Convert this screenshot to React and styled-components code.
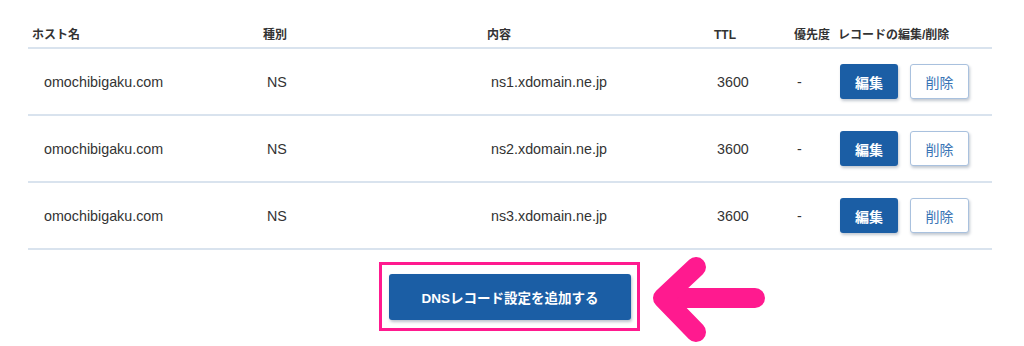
import React from "react";
import styled, { createGlobalStyle } from "styled-components";

const Global = createGlobalStyle`
  html, body { margin: 0; padding: 0; background: #ffffff; }
  body {
    font-family: "Liberation Sans", "Noto Sans CJK JP", Arial, sans-serif;
    color: #333333;
  }
`;

const Page = styled.div`
  width: 1024px;
  height: 346px;
  overflow: hidden;
  padding: 26px 32px 0 28px;
  box-sizing: border-box;
`;

const COLS = "231px 224px 227px 80px 44px 158px";

const Table = styled.div`
  display: grid;
  grid-template-columns: ${COLS};
  width: 964px;
`;

const HeadCell = styled.div`
  font-family: "Liberation Sans", "Noto Sans CJK JP", sans-serif;
  font-weight: 700;
  font-size: 12px;
  line-height: 18px;
  padding: 0 0 3px 4px;
  white-space: nowrap;
  color: #333;
  border-bottom: 2px solid #d9e3ee;
`;

const Cell = styled.div`
  height: 65px;
  display: flex;
  align-items: center;
  padding-left: ${(p) => p.$pad}px;
  font-size: 14.3px;
  color: #333;
  white-space: nowrap;
  border-bottom: 2px solid #d9e3ee;
`;

const Actions = styled.div`
  display: flex;
  gap: 12px;
  align-items: center;
`;

const BtnBase = styled.button`
  height: 35px;
  box-sizing: border-box;
  border-radius: 3px;
  font-family: "Noto Sans CJK JP", sans-serif;
  font-size: 14px;
  padding: 0;
  display: flex;
  align-items: center;
  justify-content: center;
  box-shadow: 1px 2px 3px rgba(40, 60, 90, 0.28);
  cursor: pointer;
`;

const EditBtn = styled(BtnBase)`
  width: 58px;
  background: #1b5ea5;
  border: none;
  color: #ffffff;
  font-weight: 700;
`;

const DeleteBtn = styled(BtnBase)`
  width: 59px;
  background: #ffffff;
  border: 1px solid #a9c1de;
  color: #3a74b5;
  font-weight: 400;
`;

const Footer = styled.div`
  display: flex;
  justify-content: center;
  padding-top: 12px;
  padding-right: 1px;
`;

const Highlight = styled.div`
  position: relative;
  border: 3px solid #ff1a8f;
  padding: 9px 6px 8px 7px;
`;

const AddBtn = styled.button`
  width: 242px;
  height: 46px;
  background: #1b5ea5;
  color: #ffffff;
  border: none;
  border-radius: 3px;
  font-family: "Liberation Sans", "Noto Sans CJK JP", sans-serif;
  font-weight: 700;
  font-size: 13.5px;
  box-shadow: 1px 2px 3px rgba(40, 60, 90, 0.3);
  display: block;
  padding: 0;
  cursor: pointer;
`;

const Arrow = styled.svg`
  position: absolute;
  left: 270px;
  top: -8px;
  width: 118px;
  height: 90px;
  overflow: visible;
`;

const records = [
  { host: "omochibigaku.com", type: "NS", value: "ns1.xdomain.ne.jp", ttl: "3600", prio: "-" },
  { host: "omochibigaku.com", type: "NS", value: "ns2.xdomain.ne.jp", ttl: "3600", prio: "-" },
  { host: "omochibigaku.com", type: "NS", value: "ns3.xdomain.ne.jp", ttl: "3600", prio: "-" },
];

export default function App() {
  return (
    <>
      <Global />
      <Page>
        <Table>
          <HeadCell>ホスト名</HeadCell>
          <HeadCell>種別</HeadCell>
          <HeadCell>内容</HeadCell>
          <HeadCell>TTL</HeadCell>
          <HeadCell>優先度</HeadCell>
          <HeadCell>レコードの編集/削除</HeadCell>
          {records.map((r, i) => (
            <React.Fragment key={i}>
              <Cell $pad={16}>{r.host}</Cell>
              <Cell $pad={8}>{r.type}</Cell>
              <Cell $pad={8}>{r.value}</Cell>
              <Cell $pad={7}>{r.ttl}</Cell>
              <Cell $pad={7}>{r.prio}</Cell>
              <Cell $pad={6}>
                <Actions>
                  <EditBtn>編集</EditBtn>
                  <DeleteBtn>削除</DeleteBtn>
                </Actions>
              </Cell>
            </React.Fragment>
          ))}
        </Table>
        <Footer>
          <Highlight>
            <AddBtn>DNSレコード設定を追加する</AddBtn>
            <Arrow viewBox="0 0 118 90">
              <g
                fill="none"
                stroke="#ff1a8f"
                strokeWidth="20"
                strokeLinecap="round"
                strokeLinejoin="round"
              >
                <path d="M 103 41 L 12 41" />
                <path d="M 44 10 L 11 41 L 44 75" />
              </g>
            </Arrow>
          </Highlight>
        </Footer>
      </Page>
    </>
  );
}
